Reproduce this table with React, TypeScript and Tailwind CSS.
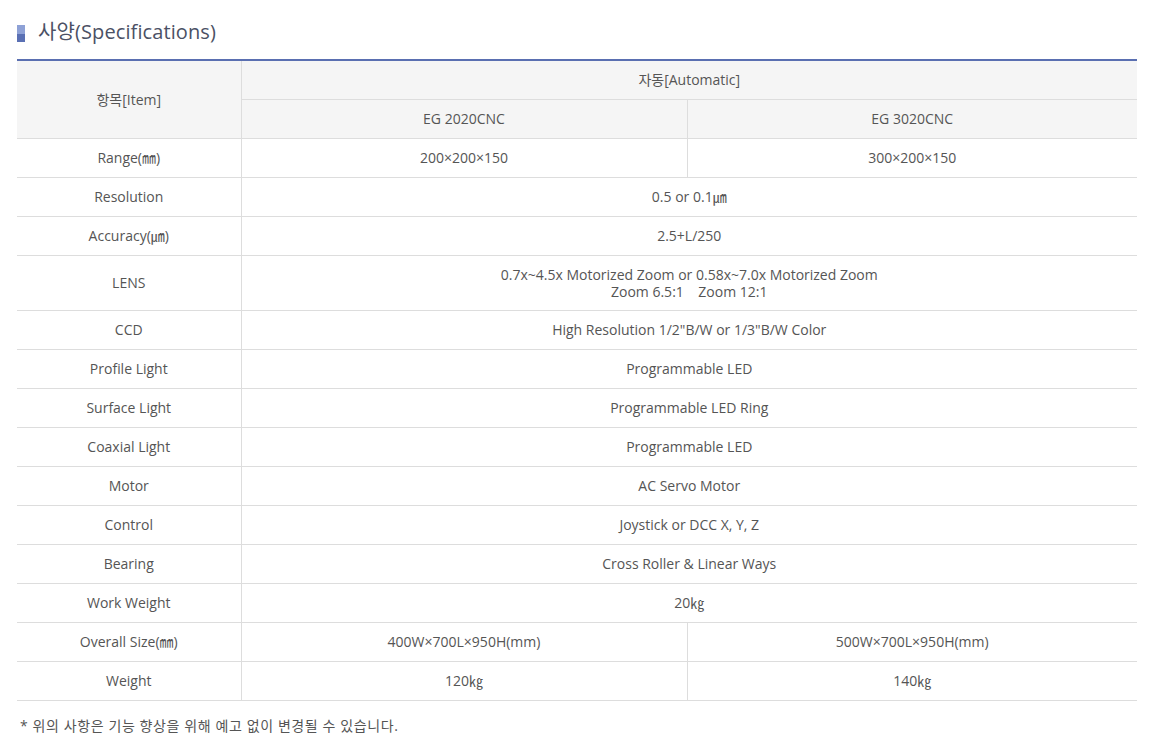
const rows: { label: string; values: string[] }[] = [
  { label: "Range(㎜)", values: ["200×200×150", "300×200×150"] },
  { label: "Resolution", values: ["0.5 or 0.1㎛"] },
  { label: "Accuracy(㎛)", values: ["2.5+L/250"] },
  {
    label: "LENS",
    values: ["0.7x~4.5x Motorized Zoom or 0.58x~7.0x Motorized Zoom\nZoom 6.5:1\u00a0\u00a0\u00a0\u00a0Zoom 12:1"],
  },
  { label: "CCD", values: ['High Resolution 1/2"B/W or 1/3"B/W Color'] },
  { label: "Profile Light", values: ["Programmable LED"] },
  { label: "Surface Light", values: ["Programmable LED Ring"] },
  { label: "Coaxial Light", values: ["Programmable LED"] },
  { label: "Motor", values: ["AC Servo Motor"] },
  { label: "Control", values: ["Joystick or DCC X, Y, Z"] },
  { label: "Bearing", values: ["Cross Roller & Linear Ways"] },
  { label: "Work Weight", values: ["20㎏"] },
  { label: "Overall Size(㎜)", values: ["400W×700L×950H(mm)", "500W×700L×950H(mm)"] },
  { label: "Weight", values: ["120㎏", "140㎏"] },
];

export default function App() {
  return (
    <div
      className="bg-white w-[1175px] h-[751px] pl-[17px] pt-[17px] text-[#555]"
      style={{ fontFamily: "'Open Sans', 'Noto Sans CJK KR', sans-serif" }}
    >
      <div className="flex items-center h-[30px]">
        <div className="w-[8px] h-[17px] flex flex-col mt-[3px]">
          <div className="h-1/2 bg-[#8ea1d6]" />
          <div className="h-1/2 bg-[#5a70b4]" />
        </div>
        <h2 className="ml-[13px] text-[20px] text-[#4b5165] tracking-[0.1px]">
          사양(Specifications)
        </h2>
      </div>

      <table className="mt-[12px] w-[1120px] table-fixed border-collapse border-t-2 border-[#5a6fb1] text-[14px]">
        <colgroup>
          <col className="w-[224px]" />
          <col className="w-[446px]" />
          <col className="w-[450px]" />
        </colgroup>
        <thead>
          <tr className="h-[39px] bg-[#f5f5f5]">
            <th
              rowSpan={2}
              className="font-normal border-b border-r border-[#dddddd] text-center"
            >
              항목[Item]
            </th>
            <th colSpan={2} className="font-normal border-b border-[#dddddd] text-center">
              자동[Automatic]
            </th>
          </tr>
          <tr className="h-[39px] bg-[#f5f5f5]">
            <th className="font-normal border-b border-r border-[#dddddd] text-center">
              EG 2020CNC
            </th>
            <th className="font-normal border-b border-[#dddddd] text-center">EG 3020CNC</th>
          </tr>
        </thead>
        <tbody>
          {rows.map((row) => (
            <tr
              key={row.label}
              className={row.label === "LENS" ? "h-[55px]" : "h-[39px]"}
            >
              <td className="border-b border-r border-[#dddddd] text-center">{row.label}</td>
              {row.values.length === 1 ? (
                <td
                  colSpan={2}
                  className="border-b border-[#dddddd] text-center whitespace-pre-line leading-[17px]"
                >
                  {row.values[0]}
                </td>
              ) : (
                <>
                  <td className="border-b border-r border-[#dddddd] text-center">
                    {row.values[0]}
                  </td>
                  <td className="border-b border-[#dddddd] text-center">{row.values[1]}</td>
                </>
              )}
            </tr>
          ))}
        </tbody>
      </table>

      <p className="mt-[14px] ml-[3px] text-[14px] tracking-[0.6px] text-[#555]">
        * 위의 사항은 기능 향상을 위해 예고 없이 변경될 수 있습니다.
      </p>
    </div>
  );
}
